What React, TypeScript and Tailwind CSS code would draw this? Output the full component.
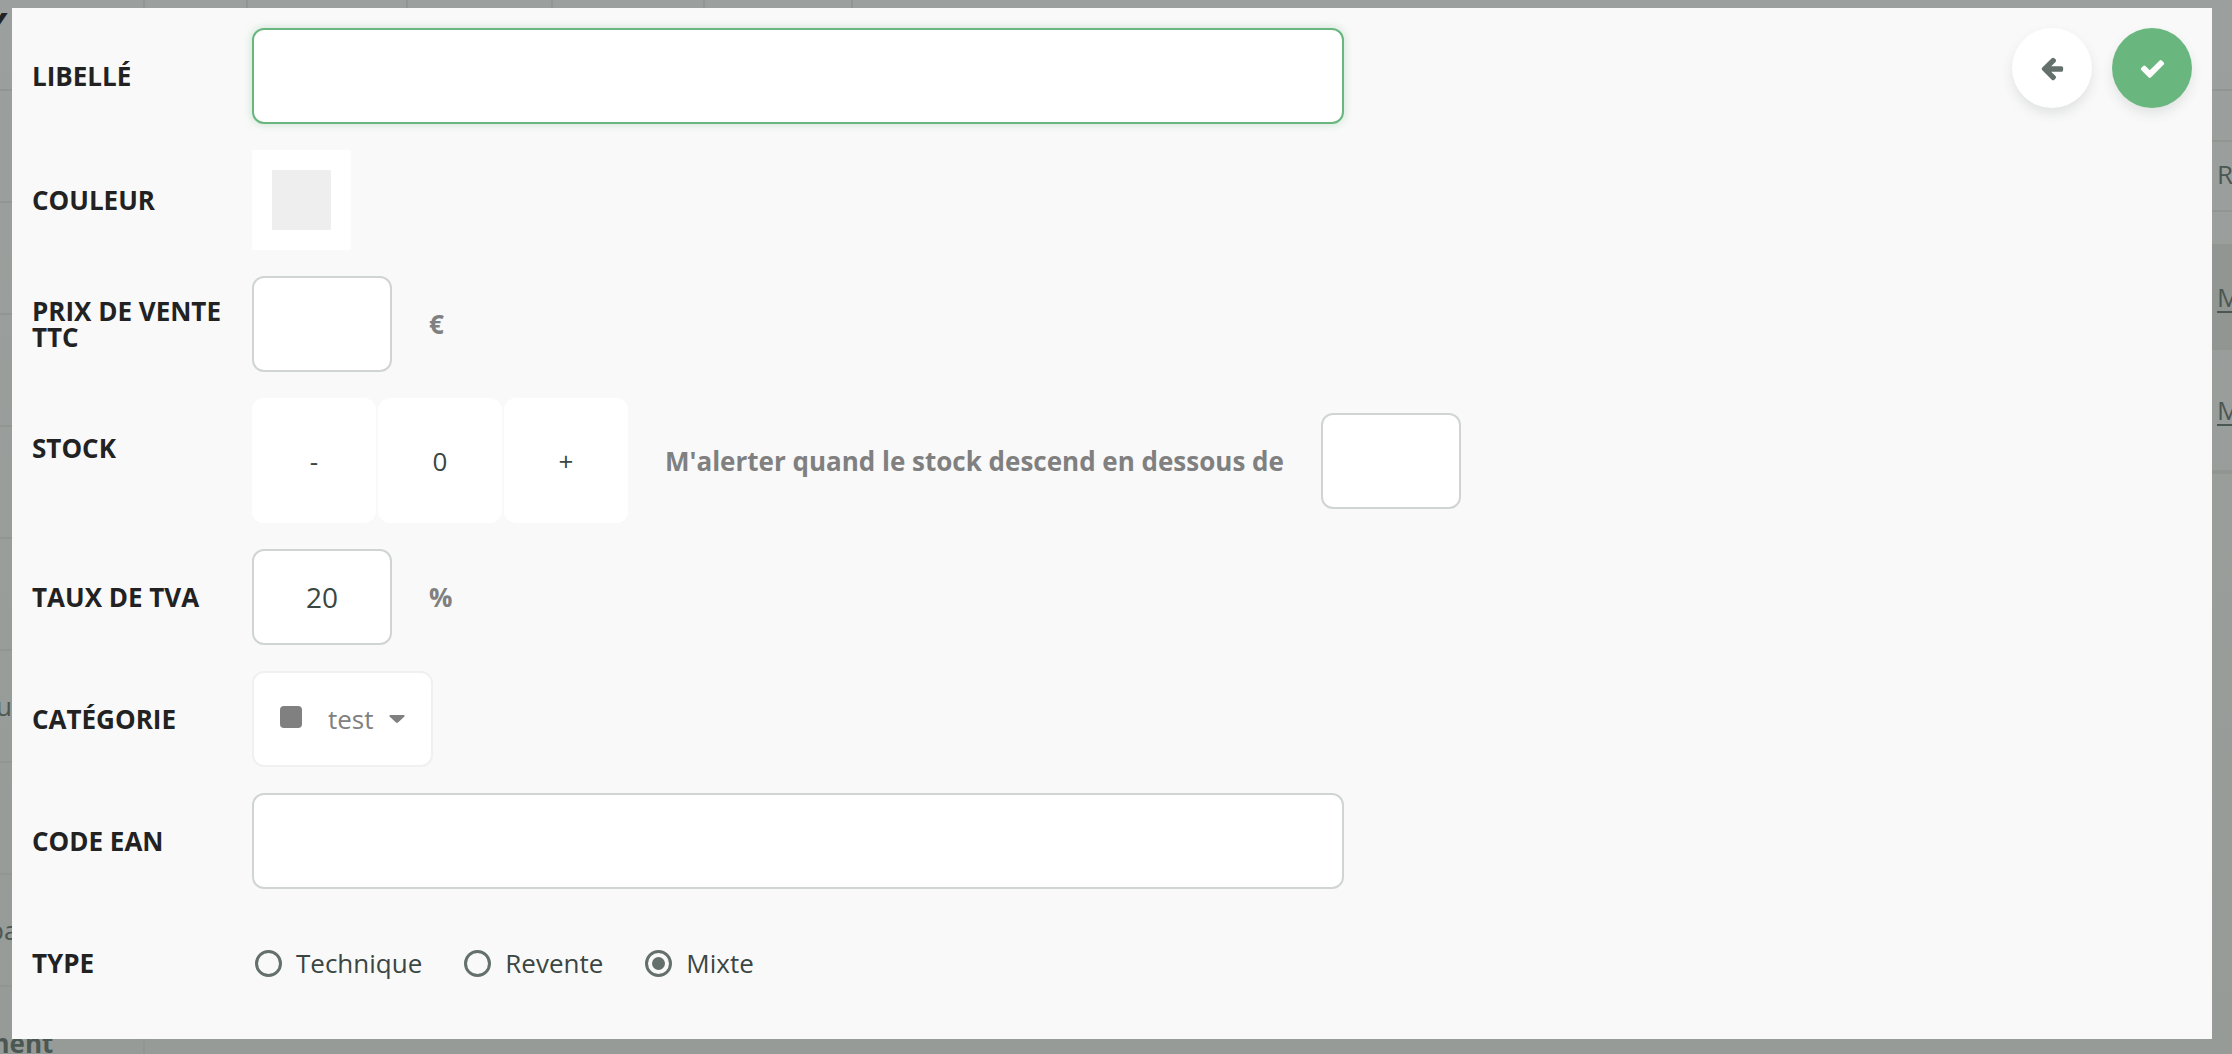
import { useState, type ReactNode } from "react";
import { clsx } from "clsx";

const PRODUCT_TYPES = ["Technique", "Revente", "Mixte"];

const inputClass =
  "h-24 rounded-xl border-2 border-[#d0d5d3] bg-white text-center text-[28px] text-[#3b4643] outline-none focus:border-[#69b77f]";

const stepClass = "h-[125px] w-[124px] rounded-xl bg-white text-center outline-none";

function Row({
  label,
  htmlFor,
  raised,
  children,
}: {
  label: string;
  htmlFor?: string;
  raised?: boolean;
  children: ReactNode;
}) {
  return (
    <div className="flex items-center">
      <label
        htmlFor={htmlFor}
        className={clsx(
          "w-[220px] shrink-0 pr-5 font-bold uppercase leading-[26px] text-[#222]",
          raised && "pb-[26px]"
        )}
      >
        {label}
      </label>
      {children}
    </div>
  );
}

function Unit({ children }: { children: ReactNode }) {
  return <span className="ml-[37px] font-bold text-[#808080]">{children}</span>;
}

function ArrowLeftIcon() {
  return (
    <svg width="26" height="26" viewBox="0 0 1792 1792" fill="#64706b" aria-hidden="true">
      <path d="M1664 896v128q0 53-32.5 90.5t-84.5 37.5h-704l293 294q38 36 38 90t-38 90l-75 76q-37 37-90 37-52 0-91-37l-651-652q-37-37-37-90 0-52 37-91l651-650q38-38 91-38 52 0 90 38l75 74q38 38 38 91t-38 91l-293 293h704q52 0 84.5 37.5t32.5 90.5z" />
    </svg>
  );
}

function CheckIcon() {
  return (
    <svg width="27" height="27" viewBox="0 0 1792 1792" fill="#fff" aria-hidden="true">
      <path d="M1671 566q0 40-28 68l-724 724-136 136q-28 28-68 28t-68-28l-136-136-362-362q-28-28-28-68t28-68l136-136q28-28 68-28t68 28l294 295 656-657q28-28 68-28t68 28l136 136q28 28 28 68z" />
    </svg>
  );
}

function Backdrop() {
  return (
    <div
      aria-hidden="true"
      className="absolute inset-0 flex overflow-hidden bg-gradient-to-b from-[#9b9f9d] to-[#979b98] text-[#4b5752]"
    >
      <div className="flex w-[145px] shrink-0 flex-col border-r-2 border-[#919693]">
        <div className="h-[91px] shrink-0 border-b-2 border-[#929693]">
          <span className="-ml-4 block pt-1 text-[36px] font-bold italic leading-[44px] text-[#222]">Y</span>
        </div>
        {["", "", "", "", "", "u", "", "pa"].map((text, i) => (
          <div key={i} className="flex h-28 shrink-0 items-center border-b-2 border-[#929693]">
            <span className={text === "pa" ? "-ml-3" : "-ml-1"}>{text}</span>
          </div>
        ))}
        <div className="flex h-28 shrink-0 items-center">
          <span className="-ml-4 font-bold">ment</span>
        </div>
      </div>
      <div className="flex h-[92px] flex-1">
        <div className="w-[103px] border-r-2 border-[#929693]" />
        <div className="w-[160px] border-r-2 border-[#929693]" />
        <div className="w-[145px] border-r-2 border-[#929693]" />
        <div className="w-[152px] border-r-2 border-[#929693]" />
        <div className="w-[148px] border-r-2 border-[#929693]" />
      </div>
      <div className="w-5 shrink-0">
        <div className="h-[91px] border-b-2 border-[#929693]" />
        <div className="h-[51px] border-b-2 border-[#929693]" />
        <div className="flex h-[70px] items-center border-b-2 border-[#929693] pb-1 pl-[5px]">R</div>
        <div className="h-8" />
        <div className="flex h-[106px] items-center bg-[#919693] pl-[5px] underline underline-offset-4">M</div>
        <div className="flex h-[124px] items-center border-b-4 border-[#929693] pl-[5px] underline underline-offset-4">M</div>
      </div>
    </div>
  );
}

export default function App() {
  const [label, setLabel] = useState("");
  const [price, setPrice] = useState("");
  const [stock, setStock] = useState(0);
  const [alertBelow, setAlertBelow] = useState("");
  const [vat, setVat] = useState("20");
  const [ean, setEan] = useState("");
  const [type, setType] = useState("Mixte");

  return (
    <div className="relative min-h-screen pt-2 pr-5 pb-[15px] pl-3 font-['Open_Sans','Noto_Sans',sans-serif] text-[26px] leading-9 text-[#3b4643]">
      <Backdrop />
      <form
        onSubmit={(e) => e.preventDefault()}
        className="relative flex items-start justify-between bg-[#f9f9f9] px-5 pt-5 pb-7"
      >
        <div className="flex min-w-0 flex-1 flex-col gap-[26px]">
          <Row label="Libellé" htmlFor="label">
            <input
              id="label"
              value={label}
              onChange={(e) => setLabel(e.target.value)}
              className="h-24 w-full max-w-[1092px] rounded-xl border-2 border-[#69b77f] bg-white px-6 text-[28px] shadow-[0_0_10px_rgba(105,183,127,0.35)] outline-none"
            />
          </Row>
          <Row label="Couleur" htmlFor="color">
            <button id="color" type="button" aria-label="Couleur" className="bg-white p-5">
              <span className="block h-[60px] w-[59px] bg-[#eee]" />
            </button>
          </Row>
          <Row label="Prix de vente TTC" htmlFor="price">
            <input
              id="price"
              value={price}
              onChange={(e) => setPrice(e.target.value)}
              className={clsx(inputClass, "w-[140px]")}
            />
            <Unit>€</Unit>
          </Row>
          <Row label="Stock" htmlFor="stock" raised>
            <div className="flex gap-[2px]">
              <button type="button" onClick={() => setStock(stock - 1)} className={stepClass}>
                -
              </button>
              <input
                id="stock"
                value={stock}
                onChange={(e) => setStock(Number(e.target.value) || 0)}
                className={stepClass}
              />
              <button type="button" onClick={() => setStock(stock + 1)} className={stepClass}>
                +
              </button>
            </div>
            <label htmlFor="alert" className="mx-[37px] font-bold text-[#808080]">
              M'alerter quand le stock descend en dessous de
            </label>
            <input
              id="alert"
              value={alertBelow}
              onChange={(e) => setAlertBelow(e.target.value)}
              className={clsx(inputClass, "w-[140px]")}
            />
          </Row>
          <Row label="Taux de TVA" htmlFor="vat">
            <input
              id="vat"
              value={vat}
              onChange={(e) => setVat(e.target.value)}
              className={clsx(inputClass, "w-[140px]")}
            />
            <Unit>%</Unit>
          </Row>
          <Row label="Catégorie" htmlFor="category">
            <div className="relative flex h-24 w-[181px] items-center rounded-xl border-2 border-[#f0f0f0] bg-white text-[#808080]">
              <span className="absolute left-[26px] mb-1 size-[22px] rounded bg-[#808080]" />
              <select
                id="category"
                className="h-full w-full appearance-none bg-transparent pl-[74px] outline-none"
              >
                <option>test</option>
              </select>
              <svg width="16" height="8" viewBox="0 0 16 8" className="pointer-events-none absolute right-[26px]" aria-hidden="true">
                <path d="M1 0h14q1 .6.4 1.4L9 7.5q-1 .8-2 0L.6 1.4Q0 .6 1 0Z" fill="#808080" />
              </svg>
            </div>
          </Row>
          <Row label="Code EAN" htmlFor="ean">
            <input
              id="ean"
              value={ean}
              onChange={(e) => setEan(e.target.value)}
              className="h-24 w-full max-w-[1092px] rounded-xl border-2 border-[#d0d5d3] bg-white px-6 text-[28px] outline-none"
            />
          </Row>
          <Row label="Type">
            <div role="radiogroup" aria-label="Type" className="flex h-24 items-center gap-[42px] pl-[3px]">
              {PRODUCT_TYPES.map((name) => (
                <label key={name} className="flex items-center gap-[14px]">
                  <input
                    type="radio"
                    name="type"
                    checked={type === name}
                    onChange={() => setType(name)}
                    className="size-[27px] appearance-none rounded-full border-3 border-[#64706b] bg-clip-content p-1 checked:bg-[#64706b]"
                  />
                  {name}
                </label>
              ))}
            </div>
          </Row>
        </div>
        <div className="flex gap-5">
          <button
            type="button"
            aria-label="Retour"
            className="flex size-20 items-center justify-center rounded-full bg-white shadow-[0_6px_12px_rgba(59,70,67,0.12)]"
          >
            <ArrowLeftIcon />
          </button>
          <button
            type="submit"
            aria-label="Valider"
            className="flex size-20 items-center justify-center rounded-full bg-[#69b77f] shadow-[0_6px_12px_rgba(59,70,67,0.12)]"
          >
            <CheckIcon />
          </button>
        </div>
      </form>
    </div>
  );
}
